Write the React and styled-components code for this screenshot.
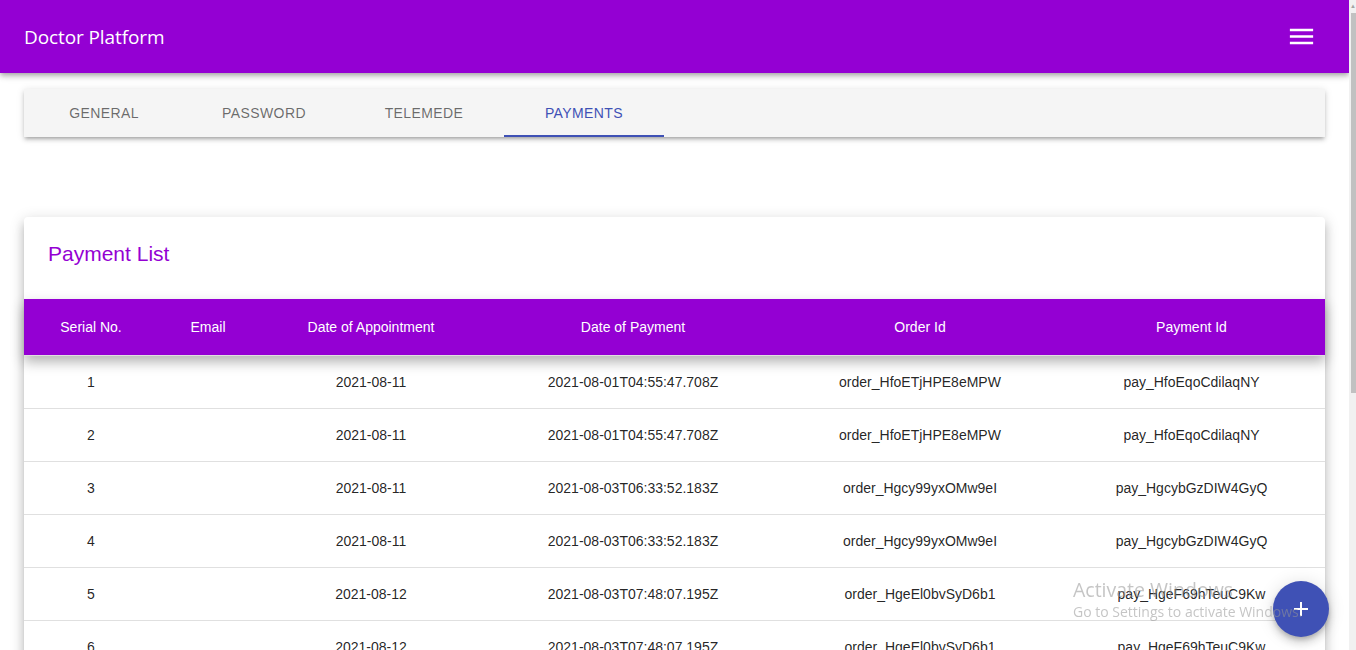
import React from "react";
import styled, { createGlobalStyle } from "styled-components";

const GlobalStyle = createGlobalStyle`
  html, body {
    margin: 0;
    padding: 0;
    overflow: hidden;
    background: #ffffff;
    font-family: "Liberation Sans", Arial, sans-serif;
  }
`;

const payments = [
  { date: "2021-08-11", paid: "2021-08-01T04:55:47.708Z", order: "order_HfoETjHPE8eMPW", pay: "pay_HfoEqoCdilaqNY" },
  { date: "2021-08-11", paid: "2021-08-01T04:55:47.708Z", order: "order_HfoETjHPE8eMPW", pay: "pay_HfoEqoCdilaqNY" },
  { date: "2021-08-11", paid: "2021-08-03T06:33:52.183Z", order: "order_Hgcy99yxOMw9eI", pay: "pay_HgcybGzDIW4GyQ" },
  { date: "2021-08-11", paid: "2021-08-03T06:33:52.183Z", order: "order_Hgcy99yxOMw9eI", pay: "pay_HgcybGzDIW4GyQ" },
  { date: "2021-08-12", paid: "2021-08-03T07:48:07.195Z", order: "order_HgeEl0bvSyD6b1", pay: "pay_HgeF69hTeuC9Kw" },
  { date: "2021-08-12", paid: "2021-08-03T07:48:07.195Z", order: "order_HgeEl0bvSyD6b1", pay: "pay_HgeF69hTeuC9Kw" },
  { date: "2021-08-14", paid: "2021-08-05T09:12:31.402Z", order: "order_HhQ2kLm8VbT1xa", pay: "pay_HhQ2uYt7RwE4zc" },
];

const columns = [
  { label: "Serial No.", width: 134 },
  { label: "Email", width: 100 },
  { label: "Date of Appointment", width: 226 },
  { label: "Date of Payment", width: 298 },
  { label: "Order Id", width: 276 },
  { label: "Payment Id", width: 267 },
];

const tabs = ["General", "Password", "Telemede", "Payments"];

export default function App() {
  return (
    <Screen>
      <GlobalStyle />
      <Main>
        <AppBar>
          <Brand>Doctor Platform</Brand>
          <MenuButton aria-label="menu">
            <svg width="31" height="31" viewBox="0 0 24 24" fill="#ffffff">
              <path d="M3 18h18v-2H3v2zm0-5h18v-2H3v2zm0-7v2h18V6H3z" />
            </svg>
          </MenuButton>
        </AppBar>

        <Content>
          <TabBar>
            {tabs.map((t) => (
              <Tab key={t} $active={t === "Payments"}>
                {t}
              </Tab>
            ))}
          </TabBar>

          <Card>
            <CardTitle>Payment List</CardTitle>
            <Table>
              <colgroup>
                {columns.map((c) => (
                  <col key={c.label} style={{ width: c.width }} />
                ))}
              </colgroup>
              <THead>
                <tr>
                  {columns.map((c) => (
                    <Th key={c.label}>{c.label}</Th>
                  ))}
                </tr>
              </THead>
              <tbody>
                {payments.map((p, i) => (
                  <tr key={i}>
                    <Td>{i + 1}</Td>
                    <Td></Td>
                    <Td>{p.date}</Td>
                    <Td>{p.paid}</Td>
                    <Td>{p.order}</Td>
                    <Td>{p.pay}</Td>
                  </tr>
                ))}
              </tbody>
            </Table>
          </Card>
        </Content>
      </Main>

      <ScrollTrack>
        <ScrollArrow>▲</ScrollArrow>
        <ScrollThumb />
      </ScrollTrack>

      <Fab aria-label="add">
        <svg width="24" height="24" viewBox="0 0 24 24" fill="#ffffff">
          <path d="M19 13h-6v6h-2v-6H5v-2h6V5h2v6h6v2z" />
        </svg>
      </Fab>

      <Watermark>
        <WatermarkTitle>Activate Windows</WatermarkTitle>
        <WatermarkText>Go to Settings to activate Windows.</WatermarkText>
      </Watermark>
    </Screen>
  );
}

const Screen = styled.div`
  display: flex;
  width: 100vw;
  height: 100vh;
  overflow: hidden;
`;

const Main = styled.div`
  flex: 1;
  min-width: 0;
  height: 100%;
  overflow: hidden;
`;

const AppBar = styled.header`
  height: 73px;
  background: #9400d3;
  display: flex;
  align-items: center;
  justify-content: space-between;
  padding: 0 32px 0 24px;
  box-shadow: 0 2px 4px -1px rgba(0, 0, 0, 0.2), 0 4px 5px 0 rgba(0, 0, 0, 0.14),
    0 1px 10px 0 rgba(0, 0, 0, 0.12);
  position: relative;
  z-index: 2;
`;

const Brand = styled.h1`
  margin: 0;
  color: #ffffff;
  font-family: "Open Sans", "Noto Sans", sans-serif;
  font-size: 19px;
  font-weight: 500;
  letter-spacing: -0.1px;
`;

const MenuButton = styled.button`
  border: none;
  background: transparent;
  padding: 0;
  display: flex;
  cursor: pointer;
`;

const Content = styled.main`
  padding: 16px 24px;
`;

const TabBar = styled.nav`
  display: flex;
  height: 48px;
  background: #f5f5f5;
  box-shadow: 0 3px 3px -2px rgba(0, 0, 0, 0.2), 0 3px 4px 0 rgba(0, 0, 0, 0.14),
    0 1px 8px 0 rgba(0, 0, 0, 0.12);
`;

const Tab = styled.div`
  width: 160px;
  display: flex;
  align-items: center;
  justify-content: center;
  box-sizing: border-box;
  padding-top: 1px;
  border-bottom: 2px solid ${(p) => (p.$active ? "#3f51b5" : "transparent")};
  color: ${(p) => (p.$active ? "#3f51b5" : "rgba(0, 0, 0, 0.58)")};
  font-size: 14px;
  text-transform: uppercase;
  letter-spacing: 0.4px;
`;

const Card = styled.section`
  margin-top: 80px;
  background: #ffffff;
  border-radius: 4px;
  box-shadow: 0 5px 5px -3px rgba(0, 0, 0, 0.2), 0 8px 10px 1px rgba(0, 0, 0, 0.14),
    0 3px 14px 2px rgba(0, 0, 0, 0.12);
`;

const CardTitle = styled.h2`
  margin: 0;
  height: 82px;
  box-sizing: border-box;
  padding: 24px 24px 0;
  line-height: 26px;
  color: #9400d3;
  font-size: 21px;
  font-weight: 400;
`;

const Table = styled.table`
  width: 100%;
  table-layout: fixed;
  border-collapse: separate;
  border-spacing: 0;
`;

const THead = styled.thead`
  background: #9400d3;
  box-shadow: 0 6px 12px rgba(0, 0, 0, 0.3);
  position: relative;
  z-index: 1;
`;

const Th = styled.th`
  height: 57px;
  padding: 0 16px;
  box-sizing: border-box;
  border-bottom: 1px solid #e0e0e0;
  color: #ffffff;
  font-size: 14px;
  font-weight: 400;
  text-align: center;
`;

const Td = styled.td`
  height: 53px;
  padding: 0 16px;
  box-sizing: border-box;
  border-bottom: 1px solid #e0e0e0;
  color: rgba(0, 0, 0, 0.87);
  font-size: 14px;
  text-align: center;
  white-space: nowrap;
`;

const ScrollTrack = styled.div`
  width: 7px;
  height: 100%;
  background: #f1f1f1;
  flex-shrink: 0;
`;

const ScrollArrow = styled.div`
  height: 12px;
  font-size: 6px;
  line-height: 12px;
  color: #a3a3a3;
  padding-left: 1px;
`;

const ScrollThumb = styled.div`
  margin: 1px 0 0 2px;
  height: 380px;
  background: #c1c1c1;
`;

const Fab = styled.button`
  position: fixed;
  right: 27px;
  bottom: 13px;
  width: 56px;
  height: 56px;
  border-radius: 50%;
  border: none;
  background: #3f51b5;
  display: flex;
  align-items: center;
  justify-content: center;
  box-shadow: 0 3px 5px -1px rgba(0, 0, 0, 0.2), 0 6px 10px 0 rgba(0, 0, 0, 0.14),
    0 1px 18px 0 rgba(0, 0, 0, 0.12);
  z-index: 4;
  cursor: pointer;
`;

const Watermark = styled.div`
  position: fixed;
  left: 1073px;
  top: 578px;
  font-family: "Open Sans", "Noto Sans", sans-serif;
  color: rgba(150, 150, 150, 0.55);
  pointer-events: none;
  z-index: 5;
`;

const WatermarkTitle = styled.div`
  font-size: 19.5px;
  line-height: 24px;
`;

const WatermarkText = styled.div`
  font-size: 14px;
  line-height: 20px;
  white-space: nowrap;
`;
